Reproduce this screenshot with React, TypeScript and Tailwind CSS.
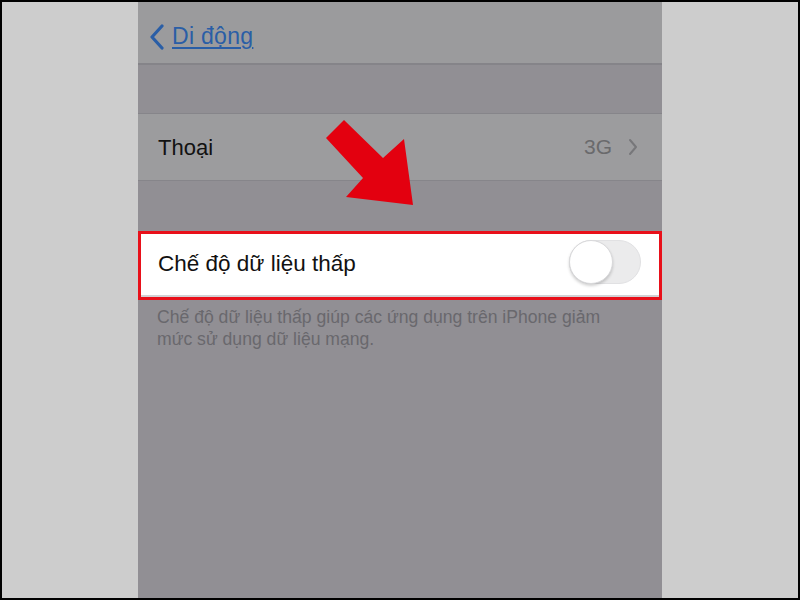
import React from "react";

const font = { fontFamily: '"Liberation Sans", "Noto Sans", Arial, sans-serif' };

const Arrow = () => (
  <svg className="absolute left-0 top-0 pointer-events-none" width="800" height="600" viewBox="0 0 800 600">
    <polygon
      points="326,138 344,120 383,158 404,139 413,205 346,197 363,178"
      fill="#e3000f"
    />
  </svg>
);

const Toggle = () => (
  <div className="w-[72px] h-[44px] rounded-full bg-[#ebebec] border border-[#e1e1e3] relative mt-[-5px]">
    <div className="absolute left-[-1px] top-[-1px] w-[44px] h-[44px] rounded-full bg-white border border-[#d9d9db] shadow-[0_2px_3px_rgba(0,0,0,0.18)]" />
  </div>
);

export default function App() {
  return (
    <div className="relative w-[800px] h-[600px] bg-black p-[2px]" style={font}>
      <div className="flex h-full">
        <div className="w-[136px] bg-[#cdcdcd]" />
        <div className="w-[524px] flex flex-col bg-[#918f94]">
          {/* nav bar */}
          <div className="h-[63px] bg-[#9b9b9d] border-b-2 border-[#858489] flex items-center pl-[10px] pt-[8px]">
            <svg width="18" height="26" viewBox="0 0 18 26" className="mr-[6px]">
              <path d="M14 2 L4 13 L14 24" fill="none" stroke="#2a5ea6" strokeWidth="3.2" strokeLinecap="round" strokeLinejoin="round" />
            </svg>
            <span className="text-[23px] text-[#2a5ea6] underline decoration-[1.5px] underline-offset-[3px] tracking-[0.3px]">
              Di động
            </span>
          </div>
          <div className="h-[48px]" />
          {/* Thoại row */}
          <div className="h-[68px] bg-[#9c9c9e] border-y border-[#86858a] flex items-center pl-[20px] pr-[24px]">
            <span className="text-[22px] text-[#121212] flex-1">Thoại</span>
            <span className="text-[21px] text-[#6a6a6c] mr-[16px]">3G</span>
            <svg width="10" height="18" viewBox="0 0 10 18">
              <path d="M2 2 L8 9 L2 16" fill="none" stroke="#77777a" strokeWidth="2" strokeLinecap="round" strokeLinejoin="round" />
            </svg>
          </div>
          <div className="h-[50px]" />
          {/* highlighted row */}
          <div className="h-[69px] border-[3px] border-[#e8101a] bg-white flex flex-col">
            <div className="flex-1 flex items-center pl-[17px] pr-[18px]">
              <span className="text-[22.5px] text-[#111] flex-1 mt-[-2px]">Chế độ dữ liệu thấp</span>
              <Toggle />
            </div>
            <div className="h-[2px] bg-[#d2d2d5]" />
          </div>
          {/* footer text */}
          <div className="pl-[19px] pr-[10px] pt-[6px] text-[17.6px] leading-[22px] text-[#69686d]">
            Chế độ dữ liệu thấp giúp các ứng dụng trên iPhone giảm
            <br />
            mức sử dụng dữ liệu mạng.
          </div>
        </div>
        <div className="w-[136px] bg-[#cdcdcd]" />
      </div>
      <Arrow />
    </div>
  );
}
